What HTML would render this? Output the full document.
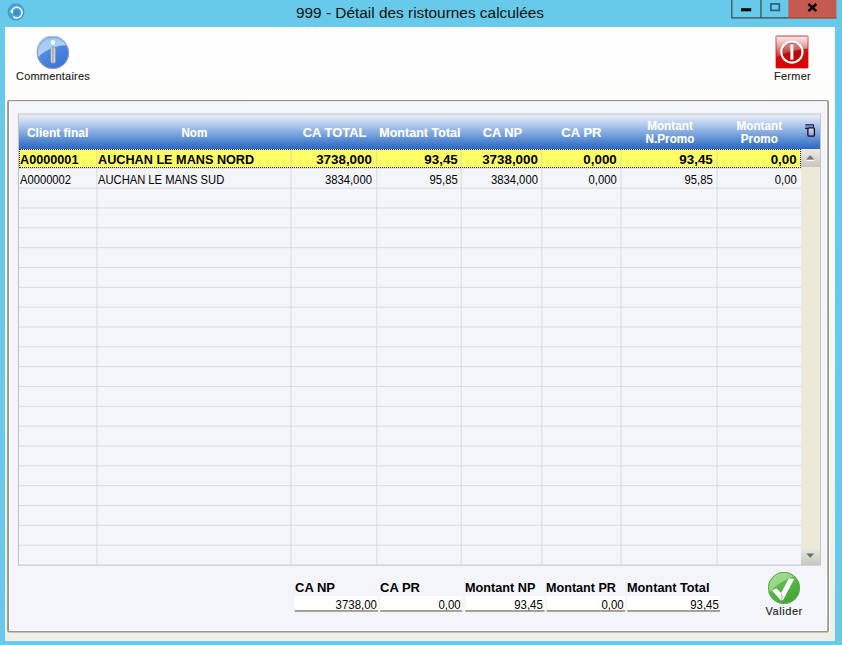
<!DOCTYPE html>
<html><head><meta charset="utf-8"><title>999</title>
<style>
*{box-sizing:border-box;margin:0;padding:0}
html,body{width:842px;height:645px;overflow:hidden}
body{background:#67caea;font-family:"Liberation Sans",sans-serif;position:relative;color:#000}
.abs{position:absolute}
#title{position:absolute;left:-1px;top:2.5px;width:842px;text-align:center;font-size:15.4px;line-height:20px;color:#111;white-space:nowrap}
#content{position:absolute;left:5.1px;top:27.4px;width:829.6px;height:613.3px;background:linear-gradient(#ffffff 0,#fdfdfc 70px,#f8f8f6 280px,#f2f2f0 480px,#efeeea 100%)}
#panel{position:absolute;left:7px;top:100.1px;width:822px;height:532.5px;background:#f4f5fb;border:2px solid #a19f94;border-radius:1.5px;box-shadow:inset 0 0 0 1.2px #fff, 1px 1px 0 #fff}
#grid{position:absolute;left:18px;top:113.5px;width:803px;height:452.2px;border:1px solid #c4c4c4;background:#f4f5fb;overflow:hidden}
#hdr{position:absolute;left:19px;top:114.6px;width:801.2px;height:34.6px;background:linear-gradient(#e8effa 0%,#c3d5f0 20%,#a2bee8 37%,#7ba4de 56%,#5388d1 76%,#2b67c3 100%)}
.h{position:absolute;color:#fff;font-weight:bold;font-size:12px;line-height:13px;text-align:center;white-space:nowrap;text-shadow:0 0 1px rgba(255,255,255,.3)}
.h span{display:inline-block}
.vl{position:absolute;width:1px;background:#dddde2;top:168px;height:397px}
.hl{position:absolute;height:1px;background:#dddde2;left:19px;width:783px}
.sel{position:absolute;left:19px;top:149.3px;width:782.3px;height:18.6px;background:#ffff66}
.c{position:absolute;white-space:nowrap;font-size:12.7px;line-height:14px}
.c span{display:inline-block}
.b{font-weight:bold}
.lbl{position:absolute;font-weight:bold;font-size:13.2px;line-height:14px;white-space:nowrap}
.lbl span{display:inline-block;transform-origin:0 0}
.fld{position:absolute;height:16px;background:#fff;border-bottom:2px solid #a29f90;font-size:12.7px;line-height:16.5px;text-align:right;white-space:nowrap}
.cap{position:absolute;font-size:11px;line-height:12px;white-space:nowrap;text-align:center;color:#1a1a1a;-webkit-text-stroke:0.12px #1a1a1a}
</style></head><body>

<svg class="abs" style="left:6.6px;top:2.8px" width="18" height="18" viewBox="0 0 18 18">
<circle cx="9" cy="9" r="8.4" fill="#3f93c8"/><circle cx="9" cy="9" r="7.3" fill="#4ba7d9"/><circle cx="9.6" cy="9.4" r="3" fill="#3590cc"/>
<path d="M4.6 8.6 A5.3 5.3 0 1 1 6.3 13.6" fill="none" stroke="#fff" stroke-width="1.4"/>
<path d="M2.9 8.1 L6.4 7.4 L5.6 10.7 Z" fill="#fff"/></svg>
<div id="title">999 - Détail des ristournes calculées</div>
<svg class="abs" style="left:725px;top:0" width="117" height="22" viewBox="725 0 117 22">
<rect x="788.3" y="0" width="48.1" height="18.4" fill="#c55a4e"/>
<rect x="788.3" y="17.4" width="48.1" height="1.1" fill="#97443b"/>
<path d="M731.8 0 V17.9 H788.3 M760.9 0 V17.9" fill="none" stroke="#3f4b51" stroke-width="1.2"/>
<rect x="741" y="8.2" width="10.2" height="3.1" fill="#000"/>
<rect x="770.9" y="3.9" width="8.4" height="6.5" fill="none" stroke="#2b647d" stroke-width="1.7"/>
<path d="M808.4 4 L816.3 11.2 M816.3 4 L808.4 11.2" stroke="#000" stroke-width="2.4"/>
</svg>
<div id="content"></div>
<svg class="abs" style="left:36px;top:35.9px" width="34" height="34" viewBox="0 0 34 34">
<defs><linearGradient id="gi" x1="0.2" y1="0" x2="0.8" y2="1"><stop offset="0" stop-color="#6aa2ea"/><stop offset="0.5" stop-color="#4c86de"/><stop offset="1" stop-color="#3a70d4"/></linearGradient>
<linearGradient id="gi2" x1="0.3" y1="0" x2="0.6" y2="1"><stop offset="0" stop-color="#9cc6f2"/><stop offset="1" stop-color="#b4d8f8"/></linearGradient>
<linearGradient id="gbar" x1="0" y1="0" x2="1" y2="0"><stop offset="0" stop-color="#f4f4f4"/><stop offset="0.45" stop-color="#a4a4a4"/><stop offset="1" stop-color="#f0f0f0"/></linearGradient></defs>
<circle cx="17" cy="17" r="16" fill="url(#gi)"/>
<path d="M1.6 21.6 A16 16 0 0 1 31.6 9.5 C24 8.6 10.5 12.3 1.6 21.6Z" fill="url(#gi2)"/>
<circle cx="17" cy="17" r="15.7" fill="none" stroke="#9a9cbc" stroke-width="1"/>
<circle cx="17" cy="6.6" r="2.3" fill="#fff"/>
<rect x="14.8" y="10.6" width="4.6" height="16.9" rx="2.3" fill="url(#gbar)" stroke="#6a6a7a" stroke-opacity=".5" stroke-width=".5"/>
</svg>
<div class="cap" style="left:13px;top:70.3px;width:80px;letter-spacing:0.2px">Commentaires</div>
<svg class="abs" style="left:775px;top:35px" width="34" height="34" viewBox="0 0 34 34">
<defs><linearGradient id="gr" x1="0" y1="0" x2="0" y2="1"><stop offset="0" stop-color="#d87070"/><stop offset="0.5" stop-color="#cc1010"/><stop offset="1" stop-color="#de0000"/></linearGradient>
<linearGradient id="gr2" x1="0" y1="0" x2="0" y2="1"><stop offset="0" stop-color="#fff" stop-opacity=".85"/><stop offset="1" stop-color="#fff" stop-opacity=".12"/></linearGradient></defs>
<rect x="0.5" y="0.5" width="33" height="33" rx="1.5" fill="url(#gr)" stroke="#e0a8a8" stroke-width="1"/>
<path d="M1.5 1.8 H32.5 V13.5 C22 14.5 9 17.5 1.5 22.5Z" fill="url(#gr2)"/>
<circle cx="17.2" cy="17.6" r="10.6" fill="#700000" fill-opacity=".22" stroke="#7a0000" stroke-opacity=".45" stroke-width="2.4"/>
<circle cx="16.9" cy="17.1" r="10.6" fill="none" stroke="#fff" stroke-width="2.2"/>
<rect x="15.4" y="9.6" width="3" height="15" fill="#fff"/>
</svg>
<div class="cap" style="left:762.5px;top:70.3px;width:60px;letter-spacing:0.27px">Fermer</div>
<svg class="abs" style="left:0;top:0" width="842" height="645" viewBox="0 0 842 645"><rect x="7.1" y="100" width="821.9" height="532.5" rx="2" fill="#9a988c"/><rect x="9" y="101.25" width="818.2" height="529.65" rx="0.8" fill="#ffffff"/><rect x="10.20" y="102.50" width="816.00" height="527.30" fill="#f4f5fb"/><rect x="829.00" y="102.00" width="1.00" height="531.30" fill="#ffffff"/><rect x="17.90" y="113.60" width="803.00" height="452.00" fill="#c0c0c0"/><rect x="18.90" y="114.60" width="801.10" height="450.00" fill="#f4f5fb"/></svg>
<div id="hdr"></div>
<div class="h" style="left:18.6px;width:78.0px;top:126.9px"><span style="transform:scaleX(1.0)">Client final</span></div>
<div class="h" style="left:97.3px;width:195.0px;top:126.9px"><span style="transform:scaleX(0.97)">Nom</span></div>
<div class="h" style="left:292px;width:85px;top:126.9px"><span style="transform:scaleX(1.08)">CA TOTAL</span></div>
<div class="h" style="left:377.5px;width:85.0px;top:126.9px"><span style="transform:scaleX(1.045)">Montant Total</span></div>
<div class="h" style="left:462.5px;width:80.0px;top:126.9px"><span style="transform:scaleX(1.07)">CA NP</span></div>
<div class="h" style="left:541.7px;width:80.0px;top:126.9px"><span style="transform:scaleX(1.09)">CA PR</span></div>
<div class="h" style="left:622.5px;width:96.0px;top:119.7px"><span style="transform:scaleX(0.98)">Montant<br>N.Promo</span></div>
<div class="h" style="left:717.7px;width:84.0px;top:119.7px"><span style="transform:scaleX(0.975)">Montant<br>Promo</span></div>
<svg class="abs" style="left:805px;top:124px" width="11" height="14" viewBox="0 0 11 14">
<defs><linearGradient id="gc" x1="0" y1="0" x2="0" y2="1"><stop offset="0" stop-color="#dcdcfa"/><stop offset="1" stop-color="#9494e6"/></linearGradient></defs>
<rect x="0.3" y="1.1" width="7.6" height="2.6" fill="#8888e6"/>
<path d="M0.2 0.8 H8.6 V3.6" fill="none" stroke="#0c0c18" stroke-width="1"/>
<path d="M0.2 4.4 H2.8" fill="none" stroke="#0c0c18" stroke-width="1.3"/>
<rect x="2.9" y="3.8" width="6.5" height="8.4" rx="1.2" fill="url(#gc)" stroke="#0c0c18" stroke-width="1.3"/></svg>
<div class="sel"></div>
<svg class="abs" style="left:0;top:0" width="842" height="645" viewBox="0 0 842 645"><rect x="96.40" y="168.00" width="1.00" height="396.60" fill="#dadadb"/><rect x="96.40" y="150.30" width="1.00" height="17.00" fill="#dcdc98"/><rect x="290.50" y="168.00" width="1.00" height="396.60" fill="#dadadb"/><rect x="290.50" y="150.30" width="1.00" height="17.00" fill="#dcdc98"/><rect x="376.30" y="168.00" width="1.00" height="396.60" fill="#dadadb"/><rect x="376.30" y="150.30" width="1.00" height="17.00" fill="#dcdc98"/><rect x="460.70" y="168.00" width="1.00" height="396.60" fill="#dadadb"/><rect x="460.70" y="150.30" width="1.00" height="17.00" fill="#dcdc98"/><rect x="541.30" y="168.00" width="1.00" height="396.60" fill="#dadadb"/><rect x="541.30" y="150.30" width="1.00" height="17.00" fill="#dcdc98"/><rect x="620.50" y="168.00" width="1.00" height="396.60" fill="#dadadb"/><rect x="620.50" y="150.30" width="1.00" height="17.00" fill="#dcdc98"/><rect x="716.60" y="168.00" width="1.00" height="396.60" fill="#dadadb"/><rect x="716.60" y="150.30" width="1.00" height="17.00" fill="#dcdc98"/><rect x="18.90" y="167.80" width="782.20" height="1.00" fill="#dadadb"/><rect x="18.90" y="187.64" width="782.20" height="1.00" fill="#dadadb"/><rect x="18.90" y="207.47" width="782.20" height="1.00" fill="#dadadb"/><rect x="18.90" y="227.31" width="782.20" height="1.00" fill="#dadadb"/><rect x="18.90" y="247.14" width="782.20" height="1.00" fill="#dadadb"/><rect x="18.90" y="266.98" width="782.20" height="1.00" fill="#dadadb"/><rect x="18.90" y="286.81" width="782.20" height="1.00" fill="#dadadb"/><rect x="18.90" y="306.64" width="782.20" height="1.00" fill="#dadadb"/><rect x="18.90" y="326.48" width="782.20" height="1.00" fill="#dadadb"/><rect x="18.90" y="346.32" width="782.20" height="1.00" fill="#dadadb"/><rect x="18.90" y="366.15" width="782.20" height="1.00" fill="#dadadb"/><rect x="18.90" y="385.99" width="782.20" height="1.00" fill="#dadadb"/><rect x="18.90" y="405.82" width="782.20" height="1.00" fill="#dadadb"/><rect x="18.90" y="425.66" width="782.20" height="1.00" fill="#dadadb"/><rect x="18.90" y="445.49" width="782.20" height="1.00" fill="#dadadb"/><rect x="18.90" y="465.33" width="782.20" height="1.00" fill="#dadadb"/><rect x="18.90" y="485.16" width="782.20" height="1.00" fill="#dadadb"/><rect x="18.90" y="505.00" width="782.20" height="1.00" fill="#dadadb"/><rect x="18.90" y="524.83" width="782.20" height="1.00" fill="#dadadb"/><rect x="18.90" y="544.66" width="782.20" height="1.00" fill="#dadadb"/></svg>
<div class="abs" style="left:18.9px;top:149.2px;width:782.6px;height:18.8px;border:1px dotted #20208a"></div>
<div class="abs" style="left:801.1px;top:149.2px;width:19px;height:416px;background:#ece9d8"></div>
<div class="abs" style="left:801.1px;top:149.2px;width:19px;height:17.6px;background:linear-gradient(#ebebe6,#c8c7be)"></div>
<div class="abs" style="left:801.1px;top:547.2px;width:19px;height:17.6px;background:linear-gradient(#ebebe6,#c8c7be)"></div>
<svg class="abs" style="left:806.3px;top:155.2px" width="9" height="6" viewBox="0 0 9 6"><path d="M0.2 5.4 H8.2" stroke="#fff" stroke-width="1"/><path d="M0.2 4.6 L4.2 0.3 L8.2 4.6Z" fill="#6e6e6e"/></svg>
<svg class="abs" style="left:806.1px;top:552.8px" width="9" height="6" viewBox="0 0 9 6"><path d="M0.2 0.4 L4.2 4.7 L8.2 0.4Z" fill="#6e6e6e"/></svg>
<div class="c b" style="left:20.2px;top:152.6px"><span style="transform:scaleX(0.998);transform-origin:0 0">A0000001</span></div>
<div class="c" style="left:20.2px;top:172.5px"><span style="transform:scaleX(0.882);transform-origin:0 0">A0000002</span></div>
<div class="c b" style="left:98.2px;top:152.6px"><span style="transform:scaleX(0.998);transform-origin:0 0">AUCHAN LE MANS NORD</span></div>
<div class="c" style="left:98.2px;top:172.5px"><span style="transform:scaleX(0.882);transform-origin:0 0">AUCHAN LE MANS SUD</span></div>
<div class="c b" style="right:469.9px;top:152.6px"><span style="transform:scaleX(1.054);transform-origin:100% 0">3738,000</span></div>
<div class="c" style="right:469.9px;top:172.5px"><span style="transform:scaleX(0.888);transform-origin:100% 0">3834,000</span></div>
<div class="c b" style="right:384.1px;top:152.6px"><span style="transform:scaleX(1.054);transform-origin:100% 0">93,45</span></div>
<div class="c" style="right:384.1px;top:172.5px"><span style="transform:scaleX(0.888);transform-origin:100% 0">95,85</span></div>
<div class="c b" style="right:304.4px;top:152.6px"><span style="transform:scaleX(1.054);transform-origin:100% 0">3738,000</span></div>
<div class="c" style="right:304.4px;top:172.5px"><span style="transform:scaleX(0.888);transform-origin:100% 0">3834,000</span></div>
<div class="c b" style="right:224.9px;top:152.6px"><span style="transform:scaleX(1.054);transform-origin:100% 0">0,000</span></div>
<div class="c" style="right:224.9px;top:172.5px"><span style="transform:scaleX(0.888);transform-origin:100% 0">0,000</span></div>
<div class="c b" style="right:128.9px;top:152.6px"><span style="transform:scaleX(1.054);transform-origin:100% 0">93,45</span></div>
<div class="c" style="right:128.9px;top:172.5px"><span style="transform:scaleX(0.888);transform-origin:100% 0">95,85</span></div>
<div class="c b" style="right:45.4px;top:152.6px"><span style="transform:scaleX(1.054);transform-origin:100% 0">0,00</span></div>
<div class="c" style="right:45.4px;top:172.5px"><span style="transform:scaleX(0.888);transform-origin:100% 0">0,00</span></div>
<div class="lbl" style="left:294.6px;top:580.5px"><span style="transform:scaleX(0.985)">CA NP</span></div>
<div class="lbl" style="left:380.4px;top:580.5px"><span style="transform:scaleX(0.985)">CA PR</span></div>
<div class="lbl" style="left:465.4px;top:580.5px"><span style="transform:scaleX(0.96)">Montant NP</span></div>
<div class="lbl" style="left:546.4px;top:580.5px"><span style="transform:scaleX(0.955)">Montant PR</span></div>
<div class="lbl" style="left:627.4px;top:580.5px"><span style="transform:scaleX(0.965)">Montant Total</span></div>
<svg class="abs" style="left:0;top:590px" width="842" height="30" viewBox="0 590 842 30"><rect x="294.60" y="596.00" width="83.50" height="14.10" fill="#ffffff"/><rect x="294.60" y="610.00" width="83.50" height="1.90" fill="#a29f90"/></svg>
<div class="c" style="right:464.8px;top:597.6px"><span style="transform:scaleX(0.9);transform-origin:100% 0">3738,00</span></div>
<svg class="abs" style="left:0;top:590px" width="842" height="30" viewBox="0 590 842 30"><rect x="380.20" y="596.00" width="81.90" height="14.10" fill="#ffffff"/><rect x="380.20" y="610.00" width="81.90" height="1.90" fill="#a29f90"/></svg>
<div class="c" style="right:381.4px;top:597.6px"><span style="transform:scaleX(0.9);transform-origin:100% 0">0,00</span></div>
<svg class="abs" style="left:0;top:590px" width="842" height="30" viewBox="0 590 842 30"><rect x="465.30" y="596.00" width="79.20" height="14.10" fill="#ffffff"/><rect x="465.30" y="610.00" width="79.20" height="1.90" fill="#a29f90"/></svg>
<div class="c" style="right:299.3px;top:597.6px"><span style="transform:scaleX(0.9);transform-origin:100% 0">93,45</span></div>
<svg class="abs" style="left:0;top:590px" width="842" height="30" viewBox="0 590 842 30"><rect x="546.60" y="596.00" width="78.50" height="14.10" fill="#ffffff"/><rect x="546.60" y="610.00" width="78.50" height="1.90" fill="#a29f90"/></svg>
<div class="c" style="right:218.2px;top:597.6px"><span style="transform:scaleX(0.9);transform-origin:100% 0">0,00</span></div>
<svg class="abs" style="left:0;top:590px" width="842" height="30" viewBox="0 590 842 30"><rect x="627.30" y="596.00" width="92.70" height="14.10" fill="#ffffff"/><rect x="627.30" y="610.00" width="92.70" height="1.90" fill="#a29f90"/></svg>
<div class="c" style="right:123.5px;top:597.6px"><span style="transform:scaleX(0.9);transform-origin:100% 0">93,45</span></div>
<svg class="abs" style="left:767.1px;top:570.7px" width="34" height="34" viewBox="0 0 34 34">
<defs><linearGradient id="gg" x1="0.2" y1="0" x2="0.8" y2="1"><stop offset="0" stop-color="#72c45e"/><stop offset="0.5" stop-color="#58b446"/><stop offset="1" stop-color="#3f9e34"/></linearGradient>
<linearGradient id="gg2" x1="0.2" y1="0" x2="0.7" y2="1"><stop offset="0" stop-color="#a6de96"/><stop offset="1" stop-color="#86cf74"/></linearGradient></defs>
<circle cx="17" cy="17" r="16" fill="url(#gg)"/>
<path d="M1.8 22 A16 16 0 0 1 27.5 4.9 C20 7.5 8.5 14 1.8 22Z" fill="url(#gg2)"/>
<circle cx="17" cy="17" r="15.6" fill="none" stroke="#5cb04c" stroke-width="1"/>
<path d="M5 19.2 L9.6 17.4 L14.1 21.9 L21.6 7.8 L27.3 7.8 L16 29.3 L13.6 29.3 Z" fill="#fff"/>
<path d="M14.1 21.9 L13.6 29.3 L15 29.3 L16.6 25.4 Z" fill="#cdcdcd"/>
</svg>
<div class="cap" style="left:754.2px;top:605px;width:60px;letter-spacing:0.55px">Valider</div>
</body></html>
